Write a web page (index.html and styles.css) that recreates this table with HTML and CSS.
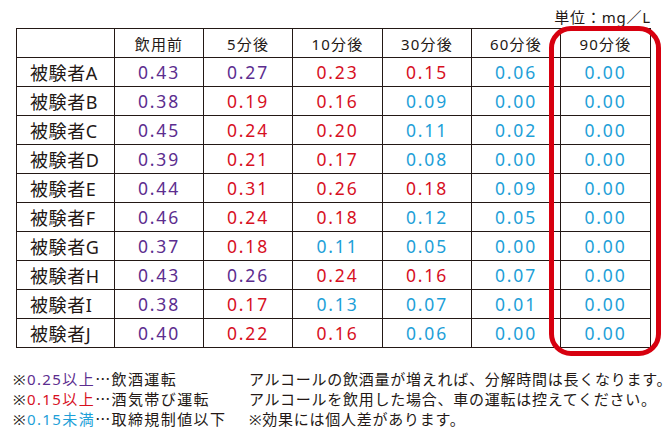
FILE: index.html
```html
<!DOCTYPE html>
<html lang="ja">
<head>
<meta charset="utf-8">
<link rel="stylesheet" href="styles.css">
</head>
<body>
<div class="page">
  <div class="unit">単位：mg／L</div>
  <div class="table-wrap">
    <table class="data">
      <colgroup>
        <col class="c-name"><col class="c89"><col class="c89"><col class="c90"><col class="c89"><col class="c89"><col class="c90">
      </colgroup>
      <thead>
        <tr><th></th><th>飲用前</th><th>5分後</th><th>10分後</th><th>30分後</th><th>60分後</th><th>90分後</th></tr>
      </thead>
      <tbody>
        <tr><th class="name">被験者A</th><td class="p">0.43</td><td class="p">0.27</td><td class="r">0.23</td><td class="r">0.15</td><td class="b">0.06</td><td class="b">0.00</td></tr>
        <tr><th class="name">被験者B</th><td class="p">0.38</td><td class="r">0.19</td><td class="r">0.16</td><td class="b">0.09</td><td class="b">0.00</td><td class="b">0.00</td></tr>
        <tr><th class="name">被験者C</th><td class="p">0.45</td><td class="r">0.24</td><td class="r">0.20</td><td class="b">0.11</td><td class="b">0.02</td><td class="b">0.00</td></tr>
        <tr><th class="name">被験者D</th><td class="p">0.39</td><td class="r">0.21</td><td class="r">0.17</td><td class="b">0.08</td><td class="b">0.00</td><td class="b">0.00</td></tr>
        <tr><th class="name">被験者E</th><td class="p">0.44</td><td class="r">0.31</td><td class="r">0.26</td><td class="r">0.18</td><td class="b">0.09</td><td class="b">0.00</td></tr>
        <tr><th class="name">被験者F</th><td class="p">0.46</td><td class="r">0.24</td><td class="r">0.18</td><td class="b">0.12</td><td class="b">0.05</td><td class="b">0.00</td></tr>
        <tr><th class="name">被験者G</th><td class="p">0.37</td><td class="r">0.18</td><td class="b">0.11</td><td class="b">0.05</td><td class="b">0.00</td><td class="b">0.00</td></tr>
        <tr><th class="name">被験者H</th><td class="p">0.43</td><td class="p">0.26</td><td class="r">0.24</td><td class="r">0.16</td><td class="b">0.07</td><td class="b">0.00</td></tr>
        <tr><th class="name">被験者I</th><td class="p">0.38</td><td class="r">0.17</td><td class="b">0.13</td><td class="b">0.07</td><td class="b">0.01</td><td class="b">0.00</td></tr>
        <tr><th class="name">被験者J</th><td class="p">0.40</td><td class="r">0.22</td><td class="r">0.16</td><td class="b">0.06</td><td class="b">0.00</td><td class="b">0.00</td></tr>
      </tbody>
    </table>
    <div class="highlight"></div>
  </div>
  <div class="notes">
    <div class="legend">
      <div>※<span class="p">0.25以上</span><span class="dots">…</span>飲酒運転</div>
      <div>※<span class="r">0.15以上</span><span class="dots">…</span>酒気帯び運転</div>
      <div>※<span class="b">0.15未満</span><span class="dots">…</span>取締規制値以下</div>
    </div>
    <div class="remarks">
      <div>アルコールの飲酒量が増えれば、分解時間は長くなります。</div>
      <div>アルコールを飲用した場合、車の運転は控えてください。</div>
      <div>※効果には個人差があります。</div>
    </div>
  </div>
</div>
</body>
</html>
```

FILE: styles.css
```css
html, body {
  margin: 0;
  padding: 0;
  background: #ffffff;
}

body {
  font-family: "Noto Sans", "Noto Sans CJK JP", sans-serif;
  color: #231815;
}

.page {
  padding: 6px 0 0 16px;
  width: 634px;
}

.unit {
  height: 22px;
  line-height: 22px;
  font-size: 15px;
  letter-spacing: 0.8px;
  text-align: right;
  margin-right: -1px;
}

.table-wrap {
  position: relative;
  width: 634px;
}

.data {
  border-collapse: collapse;
  table-layout: fixed;
  width: 634px;
}

.c-name { width: 98px; }
.c89 { width: 89px; }
.c90 { width: 90px; }

.data th,
.data td {
  border: 1px solid #231815;
  padding: 0;
  text-align: center;
  font-weight: normal;
}

.data thead th {
  height: 28px;
  font-size: 15px;
  letter-spacing: 1.2px;
}

.data tbody tr {
  height: 29px;
}

.data td {
  font-size: 17.5px;
  letter-spacing: 1.8px;
}

.data th.name {
  text-align: left;
  padding-left: 13px;
  font-size: 18px;
  letter-spacing: 0.6px;
}

.p { color: #5c2d8f; }
.r { color: #d7101f; }
.b { color: #1e9fd8; }

.highlight {
  position: absolute;
  left: 533px;
  top: -2px;
  width: 112px;
  height: 330px;
  box-sizing: border-box;
  border: 5px solid #d7000f;
  border-radius: 22px;
  pointer-events: none;
}

.notes {
  display: flex;
  margin: 21px 0 0 -3px;
  font-size: 15px;
  line-height: 20px;
}

.legend {
  flex: none;
  width: 236px;
  letter-spacing: 1.4px;
  white-space: nowrap;
}

.dots {
  font-family: "Noto Sans CJK JP", sans-serif;
}

.remarks {
  flex: none;
  letter-spacing: 0.75px;
  white-space: nowrap;
}
```
